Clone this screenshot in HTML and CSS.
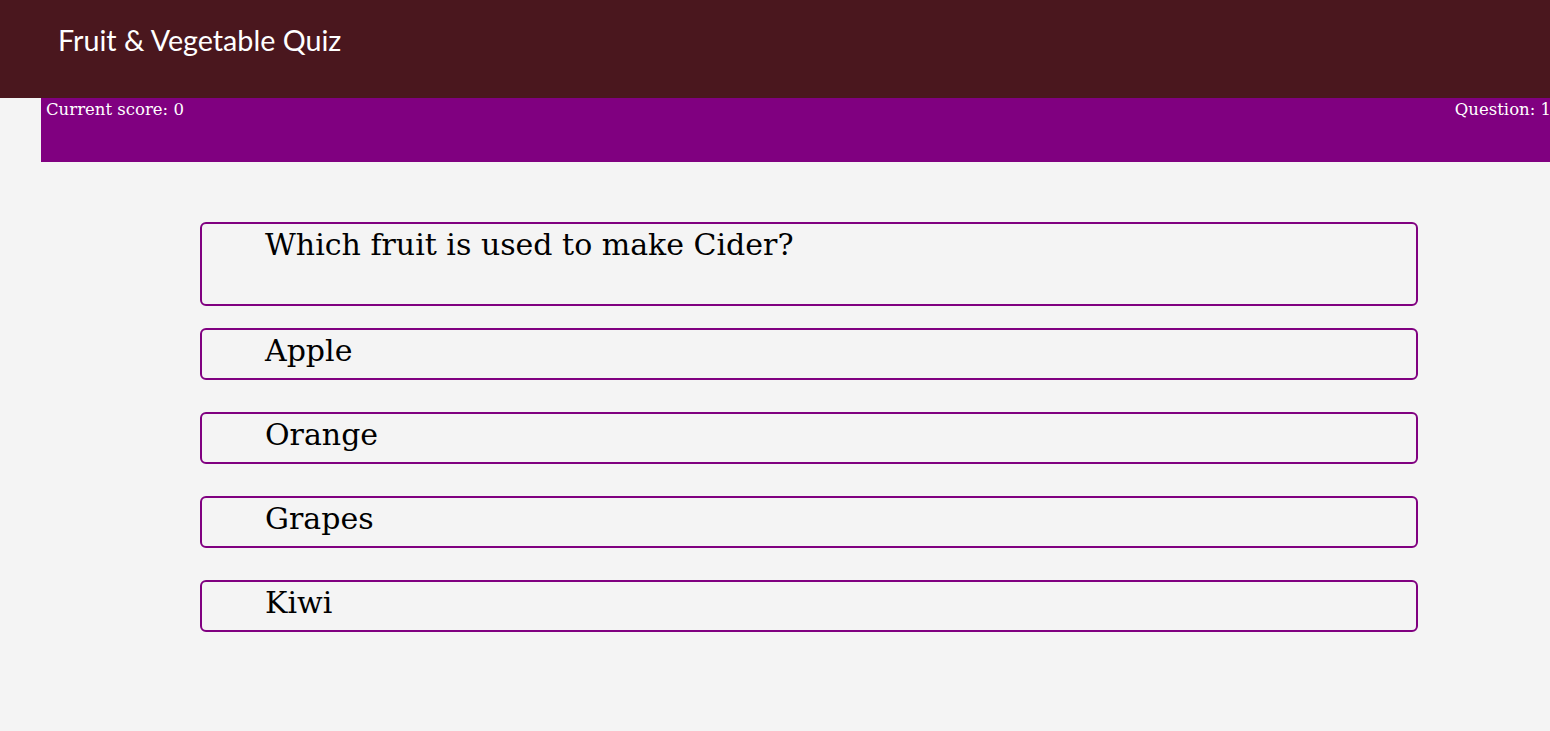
FILE: index.html
```html
<!DOCTYPE html>
<html lang="en">
<head>
<meta charset="utf-8">
<title>Fruit &amp; Vegetable Quiz</title>
<link rel="stylesheet" href="styles.css">
</head>
<body>
<header class="site-header">
  <h1 class="title">Fruit &amp; Vegetable Quiz</h1>
</header>
<div class="status-bar">
  <span class="score">Current score: 0</span>
  <span class="question-num">Question: 1</span>
</div>
<main class="quiz">
  <div class="card question">Which fruit is used to make Cider?</div>
  <div class="card answer">Apple</div>
  <div class="card answer">Orange</div>
  <div class="card answer">Grapes</div>
  <div class="card answer">Kiwi</div>
</main>
</body>
</html>
```
FILE: styles.css
```css
html, body {
  margin: 0;
  padding: 0;
  overflow-x: hidden;
}
body {
  background: #f4f4f4;
  font-family: "DejaVu Serif", "Liberation Serif", serif;
  color: #000;
}
.site-header {
  background: #4a171e;
  height: 98px;
  display: flex;
  align-items: flex-start;
  padding-left: 58px;
}
.title {
  margin: 23px 0 0;
  font-family: "Lato", "Noto Sans", sans-serif;
  font-weight: 400;
  font-size: 28.7px;
  color: #ffffff;
}
.status-bar {
  background: #800080;
  height: 64px;
  margin-left: 41px;
  margin-right: -6px;
  padding: 0 5px;
  display: flex;
  justify-content: space-between;
  align-items: flex-start;
  color: #fff;
  font-family: "DejaVu Serif", serif;
  font-size: 16.5px;
}
.status-bar span {
  margin-top: 1px;
  line-height: 22px;
}
.quiz {
  display: flex;
  flex-direction: column;
  gap: 32px;
  margin: 60px 132px 0 200px;
}
.card {
  border: 2px solid #800080;
  border-radius: 6px;
  padding: 2px 0 0 63px;
  font-size: 30px;
  line-height: 38px;
  box-sizing: content-box;
}
.question {
  height: 78px;
  margin-bottom: -10px;
}
.answer {
  height: 46px;
}
```
